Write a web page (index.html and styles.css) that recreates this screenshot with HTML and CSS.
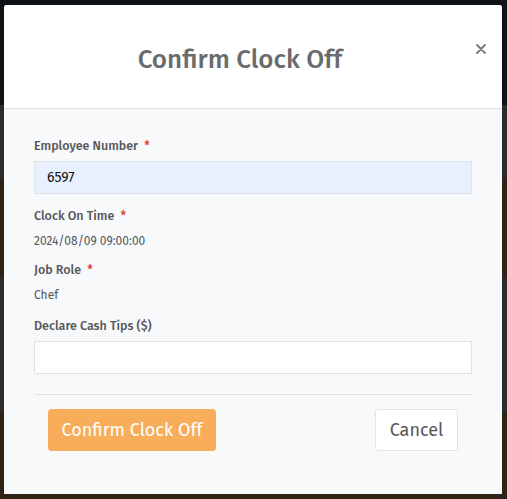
FILE: index.html
```html
<!DOCTYPE html>
<html>
<head>
<meta charset="utf-8">
<link rel="stylesheet" href="styles.css">
</head>
<body>
<div class="backdrop">
  <div class="modal">
    <div class="modal-header">
      <h1 class="modal-title">Confirm Clock Off</h1>
      <button class="close" aria-label="Close">
        <svg width="10" height="10" viewBox="0 0 10 10"><path d="M1 1L9 9M9 1L1 9" stroke="#777" stroke-width="1.8" stroke-linecap="round"/></svg>
      </button>
    </div>
    <div class="modal-body">
      <div class="field field-first">
        <label class="label">Employee Number <span class="req">*</span></label>
        <input class="input autofill" type="text" value="6597">
      </div>
      <div class="field field-tight">
        <label class="label">Clock On Time <span class="req">*</span></label>
        <div class="value">2024/08/09 09:00:00</div>
      </div>
      <div class="field field-wide">
        <label class="label">Job Role <span class="req">*</span></label>
        <div class="value">Chef</div>
      </div>
      <div class="field">
        <label class="label">Declare Cash Tips ($)</label>
        <input class="input" type="text" value="">
      </div>
      <hr class="divider">
      <div class="actions">
        <button class="btn btn-primary">Confirm Clock Off</button>
        <button class="btn btn-default">Cancel</button>
      </div>
    </div>
  </div>
</div>
</body>
</html>
```
FILE: styles.css
```css
html, body {
  margin: 0;
  padding: 0;
}
body {
  width: 507px;
  height: 499px;
  overflow: hidden;
  font-family: "Fira Sans", "Noto Sans", "Open Sans", sans-serif;
  background: linear-gradient(to bottom,
    #0e1115 0, #0e1115 105px,
    #2c2c2e 105px, #2c2c2e 178px,
    #2f2315 178px, #2f2315 278px,
    #2c2c2e 278px, #2c2c2e 412px,
    #2f2315 412px, #2f2315 499px);
}
.backdrop {
  padding: 5px 5px 0 4px;
  position: relative;
}
.modal {
  width: 498px;
  height: 489px;
  background: #f8f9fb;
  border-radius: 3px 3px 0 0;
  overflow: hidden;
  display: flex;
  flex-direction: column;
}
.modal-header {
  background: #fff;
  height: 103px;
  border-bottom: 1px solid #dde0e4;
  display: flex;
  align-items: center;
  justify-content: center;
  position: relative;
}
.modal-title {
  margin: 6px 26px 0 0;
  font-size: 26px;
  font-weight: 500;
  color: #6a6b6d;
}
.close {
  position: absolute;
  right: 15px;
  top: 38px;
  border: 0;
  background: none;
  padding: 0;
  width: 12px;
  height: 12px;
  display: flex;
  align-items: center;
  justify-content: center;
}
.modal-body {
  padding: 29px 30px 0 30px;
  display: flex;
  flex-direction: column;
}
.field {
  display: flex;
  flex-direction: column;
  margin-bottom: 13px;
}
.field-first {
  margin-bottom: 14px;
}
.field-tight {
  margin-bottom: 12px;
}
.field-wide {
  margin-bottom: 14px;
}
.label {
  font-size: 12.5px;
  font-weight: 500;
  color: #555659;
  line-height: 16px;
  margin-bottom: 7px;
}
.req {
  color: #e53935;
  margin-left: 3px;
}
.input {
  box-sizing: border-box;
  width: 438px;
  height: 33px;
  border: 1px solid #dfe2e6;
  background: #fff;
  padding: 0 12px;
  font-family: inherit;
  font-size: 14px;
  color: #111;
  outline: none;
}
.input.autofill {
  background: #e8f0fe;
}
.value {
  font-size: 12px;
  color: #555659;
  line-height: 18px;
  margin-top: 1px;
}
.divider {
  width: 438px;
  margin: 7px 0 14px 0;
  border: 0;
  border-top: 1px solid #dfe1e5;
}
.actions {
  display: flex;
  justify-content: space-between;
  padding: 0 14px;
}
.btn {
  height: 42px;
  font-family: inherit;
  font-size: 18px;
  font-weight: 400;
  border-radius: 3px;
  padding: 0 10px;
  cursor: pointer;
}
.btn-primary {
  width: 168px;
  background: #f8ad5a;
  border: 1px solid #f8ad5a;
  color: #fff;
}
.btn-default {
  width: 83px;
  background: #fff;
  border: 1px solid #e2e4e7;
  color: #55585c;
}
```
